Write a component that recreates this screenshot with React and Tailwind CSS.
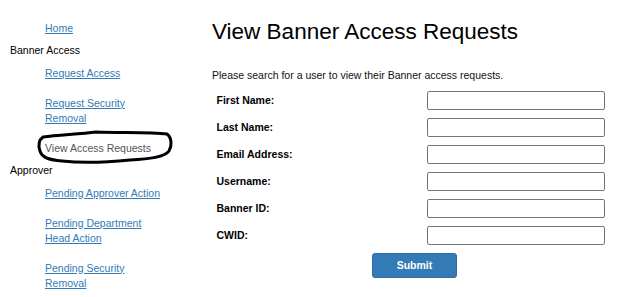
const links = {
  top: [{ label: "Home" }],
  banner: [
    { label: "Request Access" },
    { label: "Request Security Removal" },
    { label: "View Access Requests", current: true },
  ],
  approver: [
    { label: "Pending Approver Action" },
    { label: "Pending Department Head Action" },
    { label: "Pending Security Removal" },
  ],
};

const fields = ["First Name:", "Last Name:", "Email Address:", "Username:", "Banner ID:", "CWID:"];

const NavItem = ({ label, current }) => (
  <li className="py-[7.5px] pl-[45px]">
    {current ? (
      <span className="block w-[122px] text-[#555]">{label}</span>
    ) : (
      <a href="#" className="block w-[122px] text-[#337ab7] underline">
        {label}
      </a>
    )}
  </li>
);

const Sidebar = () => {
  return (
    <div className="relative w-[212px] shrink-0 pt-[13px]">
      <ul>
        {links.top.map((l) => (
          <NavItem key={l.label} {...l} />
        ))}
      </ul>
      <div className="pl-[10px] text-black">Banner Access</div>
      <ul>
        {links.banner.map((l) => (
          <NavItem key={l.label} {...l} />
        ))}
      </ul>
      <div className="pl-[10px] text-black">Approver</div>
      <ul>
        {links.approver.map((l) => (
          <NavItem key={l.label} {...l} />
        ))}
      </ul>

      {/* hand drawn circle around current page */}
      <svg className="pointer-events-none absolute left-0 top-0" width="212" height="297">
        <path
          d="M43 137 C60 135 80 134 96 132 C120 133 150 132 167 134 C172 138 172 146 169 151 C165 157 150 159 130 160 C110 162 80 163 62 161 C50 160 42 158 40 151 C38 145 39 140 43 137 Z"
          fill="none"
          stroke="#000"
          strokeWidth="3"
          strokeLinejoin="round"
        />
      </svg>
    </div>
  );
};

export default function App() {
  return (
    <div className="flex h-[297px] w-[621px] overflow-hidden bg-white font-['Liberation_Sans',Arial,sans-serif] text-[10.5px] leading-[15px] text-[#111]">
      <Sidebar />

      {/* Main Content */}
      <main className="flex-1 pt-[19px]">
        <h1 className="text-[22.5px] leading-[25px] text-black">View Banner Access Requests</h1>
        <p className="mt-[24px]">Please search for a user to view their Banner access requests.</p>

        <form className="mt-[4px]" onSubmit={(e) => e.preventDefault()}>
          {fields.map((f) => (
            <div key={f} className="flex h-[27px] items-center">
              <label className="w-[214.5px] pl-[4.5px] font-bold text-black">{f}</label>
              <input
                type="text"
                className="h-[19px] w-[178px] rounded-[2px] border border-[#767676] bg-white"
              />
            </div>
          ))}
          <div className="mt-[4px] pl-[160px]">
            <button
              type="submit"
              className="h-[25px] w-[85px] rounded-[3px] border border-[#2e6da4] bg-[#337ab7] font-bold text-white"
            >
              Submit
            </button>
          </div>
        </form>
      </main>
    </div>
  );
}
